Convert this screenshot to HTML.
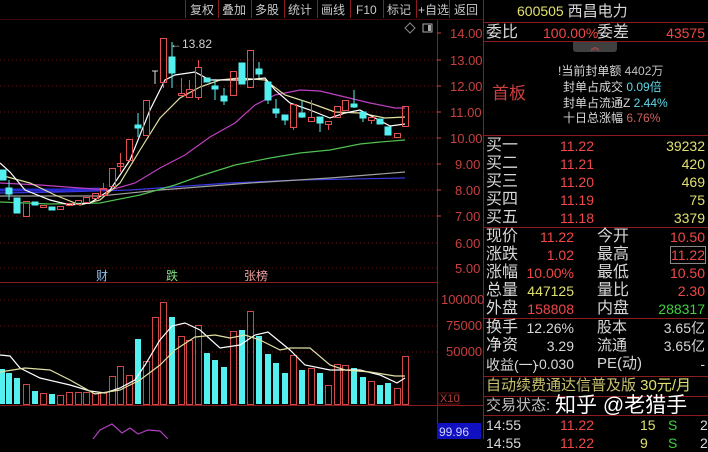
<!DOCTYPE html>
<html><head><meta charset="utf-8"><style>
body{margin:0;background:#000;width:708px;height:439px;overflow:hidden;position:relative;font-family:"Liberation Sans","Noto Sans CJK SC",sans-serif}
.t{position:absolute;white-space:nowrap;font-size:15px;line-height:17px}
.w{color:#d8d8d8}.r{color:#f04848}.y{color:#e0e070}.c{color:#60d8e8}.g{color:#40d040}.gr{color:#c0c0c0}
.rt{text-align:right}
.ln{position:absolute;left:483px;width:225px;height:1px;background:#8a1c1c}
</style></head><body>
<svg width="708" height="439" style="position:absolute;left:0;top:0">
<g stroke="#8a1c1c" stroke-width="1">
<line x1="185.5" y1="0" x2="185.5" y2="18"/><line x1="218.5" y1="0" x2="218.5" y2="18"/><line x1="251.5" y1="0" x2="251.5" y2="18"/><line x1="284.5" y1="0" x2="284.5" y2="18"/><line x1="317.5" y1="0" x2="317.5" y2="18"/><line x1="350.5" y1="0" x2="350.5" y2="18"/><line x1="383.5" y1="0" x2="383.5" y2="18"/><line x1="416.5" y1="0" x2="416.5" y2="18"/><line x1="449.5" y1="0" x2="449.5" y2="18"/>
<line x1="0" y1="19.5" x2="483" y2="19.5" stroke="#3a0a0a"/>
<line x1="437.5" y1="20" x2="437.5" y2="439"/>
<line x1="483.5" y1="0" x2="483.5" y2="439"/>
<line x1="0" y1="282.5" x2="437" y2="282.5"/>
<line x1="0" y1="405.5" x2="483" y2="405.5"/>
</g>
<g font-size="12" fill="#c8c8c8" font-family="Liberation Sans,Noto Sans CJK SC,sans-serif">
<text x="190" y="14">复权</text><text x="222" y="14">叠加</text><text x="255" y="14">多股</text><text x="288" y="14">统计</text><text x="321" y="14">画线</text><text x="356" y="14">F10</text><text x="387" y="14">标记</text><text x="418" y="14">+自选</text><text x="454" y="14">返回</text>
</g>
<g stroke="#6a1414" stroke-dasharray="1,3">
<line x1="0" y1="60" x2="437" y2="60"/><line x1="0" y1="86" x2="437" y2="86"/><line x1="0" y1="112" x2="437" y2="112"/><line x1="0" y1="138" x2="437" y2="138"/><line x1="0" y1="164" x2="437" y2="164"/><line x1="0" y1="190" x2="437" y2="190"/><line x1="0" y1="216" x2="437" y2="216"/><line x1="0" y1="243" x2="437" y2="243"/><line x1="0" y1="268" x2="437" y2="268"/>
<line x1="0" y1="300" x2="437" y2="300"/><line x1="0" y1="326" x2="437" y2="326"/><line x1="0" y1="352" x2="437" y2="352"/>
</g>
<g font-size="13" fill="#c84040" font-family="Liberation Sans,sans-serif">
<text x="450" y="38">14.00</text><text x="450" y="65">13.00</text><text x="450" y="91">12.00</text><text x="450" y="117">11.00</text><text x="450" y="143">10.00</text><text x="455" y="169">9.00</text><text x="455" y="195">8.00</text><text x="455" y="221">7.00</text><text x="455" y="248">6.00</text><text x="455" y="273">5.00</text>
<text x="441" y="304">100000</text><text x="446" y="330">75000</text><text x="446" y="356">50000</text>
</g>
<g stroke="#c84040"><line x1="437" y1="33" x2="441" y2="33"/><line x1="437" y1="60" x2="441" y2="60"/><line x1="437" y1="86" x2="441" y2="86"/><line x1="437" y1="112" x2="441" y2="112"/><line x1="437" y1="138" x2="441" y2="138"/><line x1="437" y1="164" x2="441" y2="164"/><line x1="437" y1="190" x2="441" y2="190"/><line x1="437" y1="216" x2="441" y2="216"/></g>
<rect x="438" y="393" width="21" height="11" fill="none" stroke="#6a1414"/>
<text x="440" y="402" font-size="11" fill="#b04040" font-family="Liberation Sans,sans-serif">X10</text>
<rect x="437" y="423" width="44" height="16" fill="#1010c0"/>
<text x="439" y="436" font-size="12" fill="#d0d0ff" font-family="Liberation Sans,sans-serif">99.96</text>
<path d="M405 28 L410 23 L415 28 L410 33 Z" fill="none" stroke="#888"/>
<rect x="423" y="24" width="9" height="8" fill="none" stroke="#aaa"/><rect x="428" y="25" width="3" height="6" fill="#aaa"/>
<g fill="none" stroke-width="1.2">
<polyline stroke="#2828d0" stroke-width="3" points="0,190 60,190 100,189"/>
<polyline stroke="#3838e0" points="0,193 60,192 130,190 230,183 300,180 405,178"/>
<polyline stroke="#a0a0a0" points="0,196 100,196 160,190 250,183 330,178 405,172"/>
<polyline stroke="#50c050" points="0,202 50,204 100,203 140,195 175,185 200,176 235,165 270,158 300,153 330,150 360,144 380,142 405,140"/>
<polyline stroke="#c040c0" points="0,183 40,185 80,188 110,190 135,183 160,168 185,155 210,137 235,123 255,105 275,95 300,90 320,91 345,97 370,103 395,108 405,108"/>
<polyline stroke="#e0e0a0" points="0,175 30,183 55,195 80,205 100,200 120,183 140,150 160,118 180,98 200,87 220,80 240,78 265,80 285,95 310,103 335,112 360,113 385,118 405,117"/>
<polyline stroke="#ffffff" points="0,163 10,172 25,190 50,200 70,205 90,203 110,190 130,160 150,110 165,80 175,75 195,72 210,80 230,80 245,80 265,78 275,90 290,103 310,110 330,118 345,113 360,110 375,118 390,126 405,124"/>
</g>
<g stroke="#e05050" fill="none">
<rect x="23.5" y="201.5" width="6" height="15"/><rect x="40.5" y="205.5" width="6" height="2"/><rect x="57.5" y="206.5" width="6" height="3"/><rect x="66.5" y="203.5" width="6" height="2"/><rect x="75.5" y="200.5" width="6" height="4"/><rect x="83.5" y="197.5" width="6" height="5"/><rect x="92.5" y="193.5" width="6" height="5"/><rect x="100.5" y="188.5" width="6" height="7"/><line x1="103.5" y1="183" x2="103.5" y2="188"/>
<rect x="109.5" y="168.5" width="6" height="18"/><rect x="117.5" y="163.5" width="6" height="3"/><line x1="120.5" y1="153" x2="120.5" y2="172"/>
<rect x="126.5" y="139.5" width="6" height="21"/><rect x="143.5" y="100.5" width="6" height="35"/>
<rect x="160.5" y="38.5" width="6" height="44"/><line x1="163.5" y1="82" x2="163.5" y2="88"/>
<rect x="178.5" y="93.5" width="6" height="2"/><line x1="181.5" y1="78" x2="181.5" y2="93"/>
<rect x="186.5" y="89.5" width="6" height="8"/><line x1="189.5" y1="80" x2="189.5" y2="89"/>
<rect x="195.5" y="67.5" width="6" height="30"/><line x1="198.5" y1="60" x2="198.5" y2="67"/><line x1="198.5" y1="97" x2="198.5" y2="100"/>
<rect x="230.5" y="71.5" width="6" height="24"/><rect x="247.5" y="50.5" width="6" height="37"/>
<rect x="290.5" y="104.5" width="6" height="23"/><line x1="293.5" y1="127" x2="293.5" y2="130"/>
<rect x="308.5" y="117.5" width="6" height="4"/><line x1="311.5" y1="100" x2="311.5" y2="117"/>
<rect x="325.5" y="121.5" width="6" height="3"/><line x1="328.5" y1="124" x2="328.5" y2="130"/>
<rect x="334.5" y="106.5" width="6" height="11"/><rect x="342.5" y="100.5" width="6" height="10"/>
<rect x="368.5" y="117.5" width="6" height="3"/><line x1="371.5" y1="120" x2="371.5" y2="124"/>
<rect x="394.5" y="133.5" width="6" height="4"/><rect x="402.5" y="106.5" width="6" height="20"/>
</g>
<g fill="#54f0f0" stroke="#54f0f0">
<rect x="0" y="170" width="6" height="10"/><rect x="6" y="188" width="6" height="6"/><line x1="9" y1="180" x2="9" y2="200"/>
<rect x="14" y="198" width="6" height="15"/><rect x="32" y="202" width="6" height="3"/><rect x="49" y="207" width="6" height="3"/>
<rect x="135" y="125" width="6" height="3"/><line x1="138" y1="113" x2="138" y2="137"/>
<line x1="152" y1="71" x2="158" y2="71" stroke="#ddd"/><line x1="155" y1="71" x2="155" y2="84" stroke="#ddd"/>
<rect x="169" y="57" width="6" height="16"/><line x1="172" y1="42" x2="172" y2="88"/>
<rect x="204" y="78" width="6" height="4"/><rect x="212" y="86" width="6" height="3"/><line x1="215" y1="79" x2="215" y2="100"/>
<rect x="221" y="96" width="6" height="5"/><line x1="224" y1="88" x2="224" y2="105"/>
<rect x="239" y="63" width="6" height="21"/>
<rect x="256" y="69" width="6" height="5"/><line x1="259" y1="62" x2="259" y2="78"/>
<rect x="265" y="82" width="6" height="18"/><line x1="268" y1="100" x2="268" y2="104"/>
<rect x="273" y="109" width="6" height="4"/><line x1="276" y1="99" x2="276" y2="118"/>
<rect x="282" y="115" width="6" height="5"/><line x1="285" y1="120" x2="285" y2="125"/>
<rect x="299" y="113" width="6" height="4"/><line x1="302" y1="100" x2="302" y2="118"/>
<rect x="317" y="117" width="6" height="6"/><line x1="320" y1="123" x2="320" y2="132"/>
<rect x="351" y="104" width="6" height="3"/><line x1="354" y1="90" x2="354" y2="108"/>
<rect x="360" y="112" width="6" height="6"/><line x1="363" y1="118" x2="363" y2="122"/>
<rect x="377" y="119" width="6" height="5"/><rect x="385" y="127" width="6" height="8"/>
</g>
<text x="170" y="48" font-size="12" fill="#d0d0d0" font-family="Liberation Sans,sans-serif">←13.82</text>
<g font-size="12" font-family="Liberation Sans,Noto Sans CJK SC,sans-serif">
<text x="96" y="280" fill="#90c0f0">财</text><text x="166" y="280" fill="#80e080">跌</text><text x="244" y="280" fill="#f0a0a0">张榜</text>
</g>
<g stroke="#d04848" fill="none">
<rect x="23.5" y="384.5" width="6" height="20"/><rect x="40.5" y="393.5" width="6" height="11"/><rect x="57.5" y="395.5" width="6" height="9"/><rect x="66.5" y="392.5" width="6" height="12"/><rect x="75.5" y="392.5" width="6" height="12"/><rect x="83.5" y="392.5" width="6" height="12"/><rect x="92.5" y="393.5" width="6" height="11"/><rect x="100.5" y="392.5" width="6" height="12"/><rect x="109.5" y="376.5" width="6" height="28"/><rect x="117.5" y="366.5" width="6" height="38"/><rect x="126.5" y="375.5" width="6" height="29"/><rect x="143.5" y="361.5" width="6" height="43"/><rect x="152.5" y="317.5" width="6" height="87"/><rect x="160.5" y="302.5" width="6" height="102"/><rect x="178.5" y="336.5" width="6" height="68"/><rect x="186.5" y="340.5" width="6" height="64"/><rect x="195.5" y="325.5" width="6" height="79"/><rect x="230.5" y="331.5" width="6" height="73"/><rect x="247.5" y="311.5" width="6" height="93"/><rect x="290.5" y="355.5" width="6" height="49"/><rect x="308.5" y="368.5" width="6" height="36"/><rect x="325.5" y="385.5" width="6" height="19"/><rect x="334.5" y="364.5" width="6" height="40"/><rect x="342.5" y="365.5" width="6" height="39"/><rect x="368.5" y="381.5" width="6" height="23"/><rect x="394.5" y="388.5" width="6" height="16"/><rect x="402.5" y="356.5" width="6" height="48"/>
</g>
<g fill="#54f0f0">
<rect x="0" y="369" width="5" height="35"/><rect x="6" y="373" width="6" height="31"/><rect x="14" y="378" width="6" height="26"/><rect x="32" y="391" width="6" height="13"/><rect x="49" y="394" width="6" height="10"/><rect x="135" y="339" width="6" height="65"/><rect x="169" y="317" width="6" height="87"/><rect x="204" y="353" width="6" height="51"/><rect x="212" y="360" width="6" height="44"/><rect x="221" y="367" width="6" height="37"/><rect x="239" y="330" width="6" height="74"/><rect x="256" y="336" width="6" height="68"/><rect x="265" y="354" width="6" height="50"/><rect x="273" y="363" width="6" height="41"/><rect x="282" y="373" width="6" height="31"/><rect x="299" y="370" width="6" height="34"/><rect x="317" y="373" width="6" height="31"/><rect x="351" y="368" width="6" height="36"/><rect x="360" y="377" width="6" height="27"/><rect x="377" y="385" width="6" height="19"/><rect x="385" y="383" width="6" height="21"/>
</g>
<g fill="none" stroke-width="1.2">
<polyline stroke="#ffffff" points="0,355 10,356 20,368 40,378 70,385 90,391 105,393 120,388 135,380 145,365 160,340 172,326 185,323 200,330 220,348 240,345 255,335 268,332 290,350 305,365 330,370 360,370 380,375 397,383 405,378"/>
<polyline stroke="#e0e0a0" points="0,372 25,368 50,370 70,380 95,394 120,390 140,380 160,365 175,350 195,337 215,335 230,338 245,335 260,340 280,350 290,348 310,348 330,365 345,370 370,372 395,376 405,376"/>
<polyline stroke="#b040c0" points="93,439 100,430 112,424 122,433 130,428 138,434 148,430 160,431 168,439"/>
</g>
</svg>
<div class="t y" style="left:517px;top:3px;font-size:14px">600505 <span class="w" style="font-size:15px">西昌电力</span></div>
<div class="ln" style="top:22px"></div>
<div class="t w" style="left:486px;top:24px;font-size:16px">委比</div>
<div class="t r" style="left:543px;top:25px;font-size:14px">100.00%</div>
<div class="t w" style="left:597px;top:24px;font-size:16px">委差</div>
<div class="t r rt" style="right:3px;top:25px;font-size:14px">43575</div>
<div class="ln" style="top:41px"></div>
<div style="position:absolute;left:573px;top:42px;width:44px;height:10px;background:#404040;border-radius:0 0 3px 3px;color:#e05050;font-size:9px;text-align:center;line-height:10px">︽</div>
<div class="t r" style="left:492px;top:84px;font-size:17px;line-height:20px;color:#d04040">首板</div>
<div class="t w" style="left:558px;top:63px;font-size:12px">!当前封单额 <span class="gr">4402万</span></div>
<div class="t w" style="left:563px;top:79px;font-size:12px">封单占成交 <span class="c">0.09倍</span></div>
<div class="t w" style="left:563px;top:95px;font-size:12px">封单占流通Z <span class="c">2.44%</span></div>
<div class="t w" style="left:563px;top:110px;font-size:12px">十日总涨幅 <span class="r" style="color:#d06060">6.76%</span></div>
<div class="ln" style="top:135px"></div>
<div class="t w" style="left:486px;top:137px;font-size:16px;line-height:18px">买一<br>买二<br>买三<br>买四<br>买五</div>
<div class="t r" style="left:560px;top:137px;font-size:14px;line-height:18px">11.22<br>11.21<br>11.20<br>11.19<br>11.18</div>
<div class="t y rt" style="right:3px;top:137px;font-size:14px;line-height:18px">39232<br>420<br>469<br>75<br>3379</div>
<div class="ln" style="top:227px"></div>
<div class="t w" style="left:486px;top:228px;font-size:16px;line-height:18px">现价<br>涨跌<br>涨幅<br>总量<br>外盘</div>
<div class="t rt" style="right:134px;top:228px;font-size:14px;line-height:18px"><span class="r">11.22</span><br><span class="r">1.02</span><br><span class="r">10.00%</span><br><span class="y">447125</span><br><span class="r">158808</span></div>
<div class="t w" style="left:597px;top:228px;font-size:16px;line-height:18px">今开<br>最高<br>最低<br>量比<br>内盘</div>
<div class="t rt" style="right:3px;top:228px;font-size:14px;line-height:18px"><span class="r">10.50</span><br><span class="r" style="outline:1px solid #888">11.22</span><br><span class="r">10.50</span><br><span class="r">2.30</span><br><span class="g">288317</span></div>
<div class="ln" style="top:318px"></div>
<div class="t w" style="left:486px;top:319px;font-size:16px;line-height:18px">换手<br>净资</div>
<div class="t w" style="left:486px;top:356px;font-size:14px;line-height:18px">收益(一)</div>
<div class="t w rt" style="right:134px;top:319px;font-size:14px;line-height:18px">12.26%<br>3.29<br>-0.030</div>
<div class="t w" style="left:597px;top:319px;font-size:15px;line-height:18px">股本<br>流通<br>PE(动)</div>
<div class="t w rt" style="right:3px;top:319px;font-size:14px;line-height:18px">3.65亿<br>3.65亿<br>-</div>
<div class="ln" style="top:376px"></div>
<div class="t" style="left:486px;top:377px;font-size:15px;color:#c8c070">自动续费通达信普及版 <span class="y">30元/月</span></div>
<div class="ln" style="top:396px"></div>
<div class="t gr" style="left:486px;top:397px;font-size:15px">交易状态:</div>
<div class="t" style="left:555px;top:394px;font-size:21px;line-height:23px;color:#fff">知乎 @老猎手</div>
<div class="ln" style="top:415px"></div>
<div class="t w" style="left:486px;top:416px;font-size:14px;line-height:18px">14:55<br>14:55</div>
<div class="t r" style="left:560px;top:416px;font-size:14px;line-height:18px">11.22<br>11.22</div>
<div class="t y" style="left:640px;top:416px;font-size:14px;line-height:18px">15<br>9</div>
<div class="t g" style="left:668px;top:416px;font-size:14px;line-height:18px">S<br>S</div>
<div class="t w" style="left:700px;top:416px;font-size:14px;line-height:18px">2<br>2</div>
</body></html>
